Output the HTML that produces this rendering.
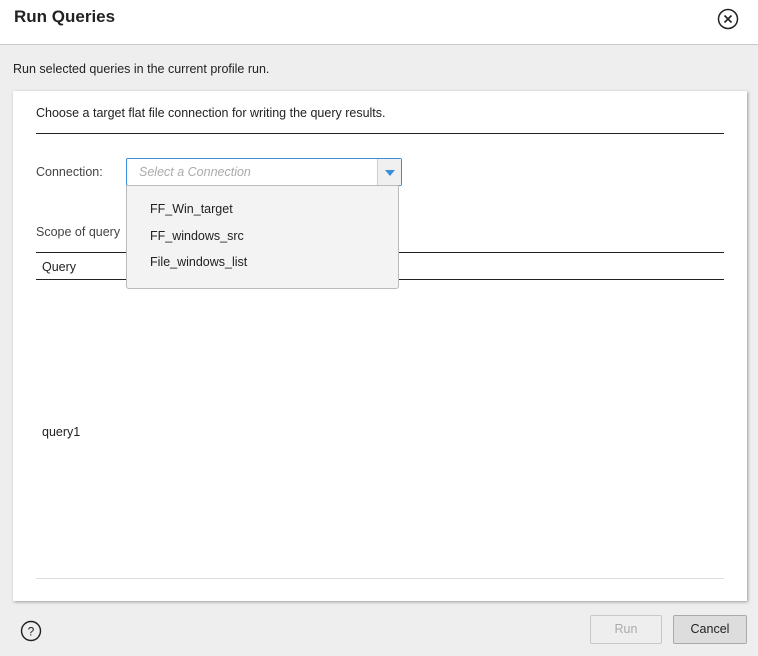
<!DOCTYPE html>
<html><head><style>
body{margin:0;width:758px;height:656px;background:#eeeeee;font-family:"Liberation Sans",sans-serif;font-size:12.5px;color:#222;position:relative;overflow:hidden}
.a{position:absolute}
</style></head><body>
<div class="a" style="left:0;top:0;width:758px;height:44px;background:#fff;border-bottom:1px solid #c8c8c8"></div>
<div class="a" style="left:14px;top:7px;font-size:17px;font-weight:bold;color:#222">Run Queries</div>
<svg class="a" style="left:717px;top:8px" width="22" height="22" viewBox="0 0 22 22"><circle cx="11" cy="11" r="9.5" fill="none" stroke="#222" stroke-width="1.5"/><path d="M7.5 7.5L14.5 14.5M14.5 7.5L7.5 14.5" stroke="#222" stroke-width="1.6"/></svg>
<div class="a" style="left:13px;top:62px">Run selected queries in the current profile run.</div>
<div class="a" style="left:13px;top:91px;width:734px;height:510px;background:#fff;box-shadow:1px 1px 3px rgba(0,0,0,.35)"></div>
<div class="a" style="left:36px;top:106px">Choose a target flat file connection for writing the query results.</div>
<div class="a" style="left:36px;top:133px;width:688px;height:1px;background:#222"></div>
<div class="a" style="left:36px;top:165px;color:#444">Connection:</div>
<div class="a" style="left:126px;top:158px;width:274px;height:26px;border:1px solid #3a8fd9;border-radius:2px;background:#fff"></div>
<div class="a" style="left:139px;top:165px;color:#aaa;font-style:italic">Select a Connection</div>
<div class="a" style="left:377px;top:159px;width:1px;height:26px;background:#ccc"></div>
<div class="a" style="left:378px;top:159px;width:23px;height:26px;background:#f0f0f0"></div>
<div class="a" style="left:385px;top:170px;width:0;height:0;border-left:5px solid transparent;border-right:5px solid transparent;border-top:6px solid #3a8fd9"></div>
<div class="a" style="left:36px;top:225px;color:#444">Scope of query</div>
<div class="a" style="left:36px;top:252px;width:688px;height:1px;background:#222"></div>
<div class="a" style="left:42px;top:260px">Query</div>
<div class="a" style="left:36px;top:279px;width:688px;height:1px;background:#222"></div>
<div class="a" style="left:126px;top:185px;width:271px;height:102px;background:#f3f3f3;border:1px solid #bbb;border-radius:0 0 3px 3px"></div>
<div class="a" style="left:150px;top:202px">FF_Win_target</div>
<div class="a" style="left:150px;top:229px">FF_windows_src</div>
<div class="a" style="left:150px;top:255px">File_windows_list</div>
<div class="a" style="left:42px;top:425px">query1</div>
<div class="a" style="left:36px;top:578px;width:688px;height:1px;background:#ddd"></div>
<svg class="a" style="left:20px;top:620px" width="22" height="22" viewBox="0 0 22 22"><circle cx="11" cy="11" r="9.5" fill="none" stroke="#222" stroke-width="1.4"/><text x="11" y="15.5" font-size="12" font-family="Liberation Sans" text-anchor="middle" fill="#222">?</text></svg>
<div class="a" style="left:590px;top:615px;width:70px;height:27px;border:1px solid #c8c8c8;border-radius:2px;color:#aaa;text-align:center;line-height:27px">Run</div>
<div class="a" style="left:673px;top:615px;width:72px;height:27px;border:1px solid #aaa;border-radius:2px;background:#ddd;text-align:center;line-height:27px">Cancel</div>
</body></html>
